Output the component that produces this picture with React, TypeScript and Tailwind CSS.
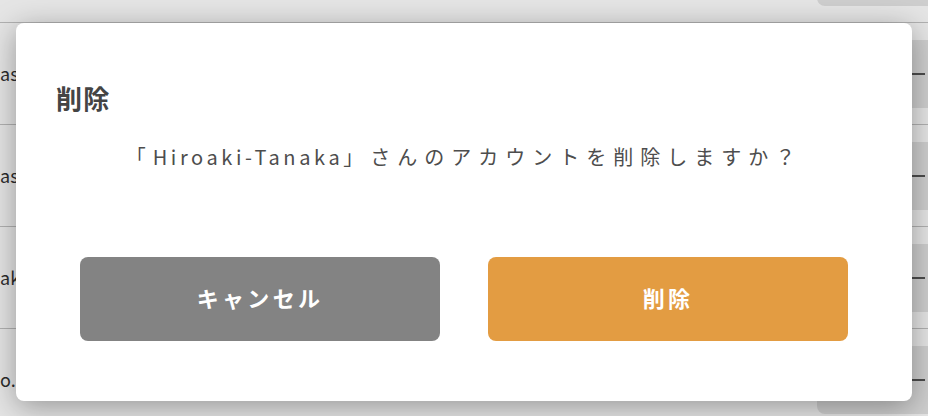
import React from "react";

const rows = [
  { text: "" },
  { text: "asano@example.com" },
  { text: "asakura@example.com" },
  { text: "akiyama@example.com" },
  { text: "o.ishii@example.com" },
];

export default function App() {
  return (
    <div
      className="relative w-[928px] h-[416px] overflow-hidden bg-white"
      style={{ fontFamily: '"Noto Sans CJK JP", "Noto Sans", sans-serif' }}
    >
      {/* background page */}
      <div className="-mt-[79px] flex flex-col">
        {rows.map((r, i) => (
          <div
            key={i}
            className="h-[102px] flex items-center border-b border-[#c6c6c6]"
          >
            <div className="flex-1 text-[18px] text-[#333] whitespace-nowrap overflow-hidden">
              {r.text}
            </div>
            <div className="w-[111px] h-[68px] rounded-l-lg bg-[#e6e6e6] flex items-center">
              <div className="ml-[95px] w-[13px] h-[2px] bg-[#555]" />
            </div>
          </div>
        ))}
      </div>

      {/* overlay */}
      <div className="absolute inset-0 bg-black/10" />

      {/* modal */}
      <div className="absolute left-[16px] top-[23px] w-[896px] h-[378px] bg-white rounded-lg shadow-[0_6px_30px_rgba(0,0,0,0.35)] flex flex-col">
        <div className="pt-[57px] pl-[40px] text-[26px] leading-[36px] font-bold text-[#444] tracking-[0.05em]">
          削除
        </div>
        <div className="mt-[26px] text-center text-[20px] leading-[30px] text-[#4d4d4d] tracking-[0.35em]">
          「<span className="tracking-[0.18em]">Hiroaki-Tanaka</span>」さんのアカウントを削除しますか？
        </div>
        <div className="mt-[85px] px-16 flex gap-12">
          <button className="flex-1 h-[84px] rounded-lg bg-[#838383] text-white text-[22px] font-bold tracking-[0.15em] flex items-center justify-center pb-[3px]">
            キャンセル
          </button>
          <button className="flex-1 h-[84px] rounded-lg bg-[#e39c42] text-white text-[22px] font-bold tracking-[0.15em] flex items-center justify-center pb-[3px]">
            削除
          </button>
        </div>
      </div>
    </div>
  );
}
